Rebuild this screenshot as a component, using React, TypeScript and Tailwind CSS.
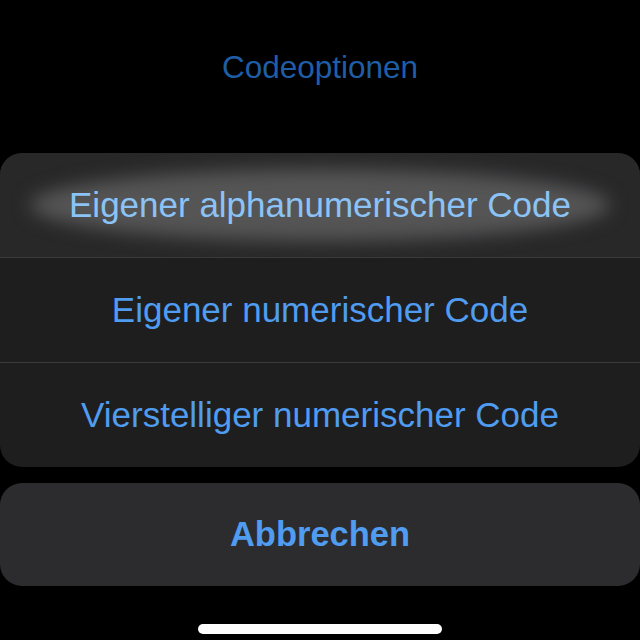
const options = [
  'Eigener alphanumerischer Code',
  'Eigener numerischer Code',
  'Vierstelliger numerischer Code',
];

export default function App() {
  return (
    <div
      className="w-[640px] h-[640px] bg-black flex flex-col overflow-hidden"
      style={{ fontFamily: '"Liberation Sans", Arial, sans-serif' }}
    >
      {/* Title */}
      <div className="h-[153px] flex items-center justify-center pb-[18px]">
        <span className="text-[31.5px] text-[#1f5ea6]">Codeoptionen</span>
      </div>

      {/* Options group */}
      <div className="bg-[#1e1e1f] rounded-[22px] overflow-hidden flex flex-col">
        {options.map((label, i) => (
          <div key={label} className="flex flex-col">
            {i > 0 && <div className="h-px bg-[#3a3a3c]" />}
            <div
              className={
                i === 0
                  ? 'relative h-[104px] flex items-center justify-center bg-[#282829]'
                  : 'relative h-[104px] flex items-center justify-center'
              }
            >
              {i === 0 && (
                <div className="absolute left-[30px] right-[30px] top-[16px] bottom-[16px] rounded-[50%] bg-[#555556] blur-[9px]" />
              )}
              <span
                className={
                  i === 0
                    ? 'relative text-[35px] text-[#8cc3f6]'
                    : 'relative text-[35px] text-[#4f9cf0]'
                }
              >
                {label}
              </span>
            </div>
          </div>
        ))}
      </div>

      {/* Cancel */}
      <div className="mt-[16px] h-[103px] bg-[#2c2c2e] rounded-[22px] flex items-center justify-center">
        <span className="text-[34.5px] font-bold text-[#4f9cf0]">Abbrechen</span>
      </div>

      {/* Home indicator */}
      <div className="flex-1 flex items-start justify-center pt-[38px]">
        <div className="w-[244px] h-[10px] rounded-full bg-white" />
      </div>
    </div>
  );
}
